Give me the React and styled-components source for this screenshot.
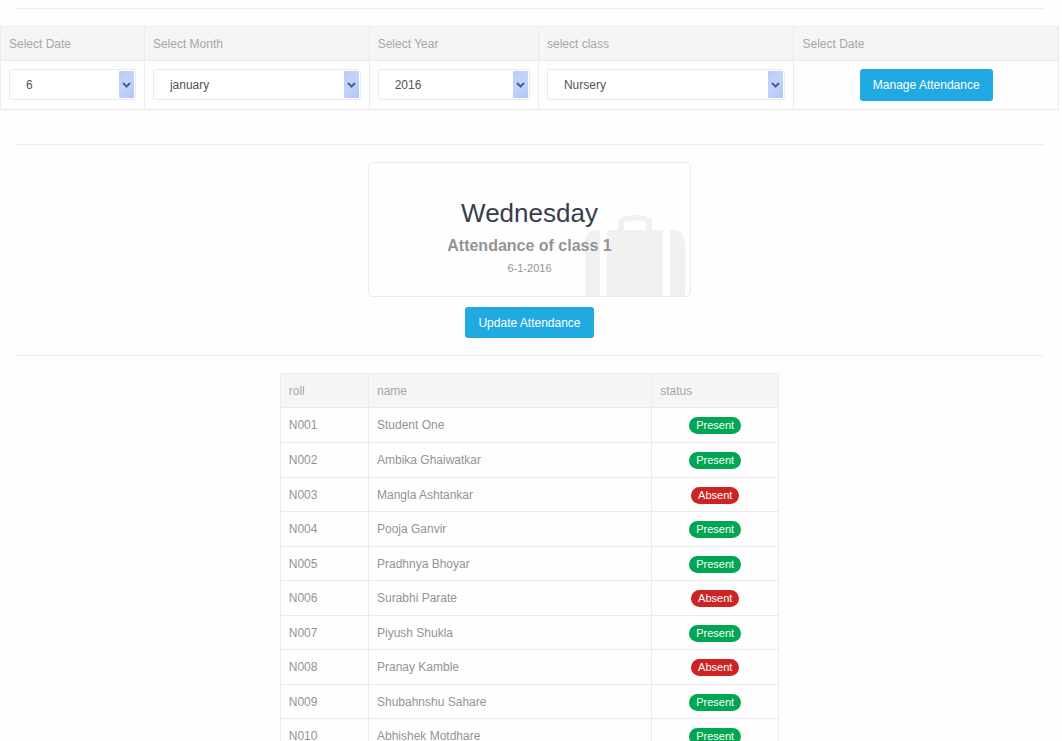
import React, { useState } from "react";
import styled, { createGlobalStyle } from "styled-components";

const GlobalStyle = createGlobalStyle`
  * { box-sizing: border-box; }
  body {
    margin: 0;
    background: #fefefe;
    color: #949494;
    font-family: "Liberation Sans", Arial, sans-serif;
    font-size: 12px;
    line-height: 18px;
  }
`;

const Page = styled.main`
  padding: 8px 3px 0 0;
`;

const Rule = styled.hr`
  margin: 0 15px;
  border: 0;
  border-top: 1px solid #eeeeee;
`;

const DataTable = styled.table`
  width: 100%;
  table-layout: fixed;
  border-collapse: collapse;
`;

const HeadCell = styled.th`
  height: 34px;
  padding: 0 8px;
  border: 1px solid #ebebeb;
  background: #f5f5f5;
  color: #a6a7aa;
  font-weight: 400;
  text-align: left;
`;

const Cell = styled.td`
  padding: 0 8px;
  border: 1px solid #ebebeb;
  text-align: ${(p) => (p.$center ? "center" : "left")};
`;

const FilterForm = styled.form`
  margin: 17px 0 34px;
`;

const FilterCell = styled(Cell)`
  height: 49px;
  padding: 8px;
  vertical-align: top;
`;

const SelectBox = styled.div`
  position: relative;
`;

const Select = styled.select`
  display: block;
  width: 100%;
  height: 31px;
  padding: 0 24px 0 16px;
  border: 1px solid #ebebeb;
  border-radius: 3px;
  background: #fff;
  color: #555;
  font: inherit;
  appearance: none;
`;

const Arrow = styled.span`
  position: absolute;
  top: 2px;
  right: 2px;
  bottom: 2px;
  width: 15px;
  display: flex;
  align-items: center;
  justify-content: center;
  border-radius: 1px;
  background: linear-gradient(135deg, #b9cbf6, #c4d3fc 50%, #aac8f8);
  pointer-events: none;
`;

const Button = styled.button`
  height: ${(p) => p.$height}px;
  padding: 0 13px;
  border: 0;
  border-radius: 3px;
  background: #21a9e1;
  color: #fff;
  font: inherit;
  cursor: pointer;
`;

const Summary = styled.section`
  display: flex;
  flex-direction: column;
  align-items: center;
  gap: 10px;
  padding: 17px 0;
`;

const CardColumn = styled.div`
  width: calc(100% / 3);
  padding: 0 15px;
`;

const Card = styled.div`
  position: relative;
  overflow: hidden;
  padding: 30px 20px 18px;
  border: 1px solid #ebebeb;
  border-radius: 5px;
  text-align: center;
`;

const Suitcase = styled.svg`
  position: absolute;
  right: 5px;
  bottom: 0;
  width: 100px;
  height: 81px;
  fill: #f1f1f1;
`;

const CardText = styled.div`
  position: relative;
`;

const Day = styled.h2`
  margin: 0;
  color: #373e4a;
  font-size: 26px;
  font-weight: 400;
  line-height: 40px;
`;

const ClassName = styled.h3`
  margin: 0;
  font-size: 16px;
  font-weight: 700;
  line-height: 26px;
`;

const DateLine = styled.p`
  margin: 0;
  font-size: 11px;
  line-height: 19px;
`;

const Roster = styled.section`
  width: 50%;
  margin: 17px auto 0;
  padding: 0 15px;
`;

const StudentRow = styled.tr`
  height: 35px;
  &:nth-child(2n + 3) { height: 34px; }
`;

const Badge = styled.span`
  display: inline-block;
  padding: 0 7px;
  border-radius: 9px;
  background: ${(p) => (p.$present ? "#00a651" : "#cc2424")};
  color: #fff;
  font-size: 11px;
  line-height: 17px;
  vertical-align: middle;
`;

const filters = [
  { id: "date", label: "Select Date", width: "13.6%", options: ["6", "7", "8"] },
  { id: "month", label: "Select Month", width: "21.25%", options: ["january", "february", "march"] },
  { id: "year", label: "Select Year", width: "16%", options: ["2016", "2015", "2014"] },
  { id: "class", label: "select class", width: "24.15%", options: ["Nursery", "One", "Two"] },
];

const students = [
  ["N001", "Student One", true],
  ["N002", "Ambika Ghaiwatkar", true],
  ["N003", "Mangla Ashtankar", false],
  ["N004", "Pooja Ganvir", true],
  ["N005", "Pradhnya Bhoyar", true],
  ["N006", "Surabhi Parate", false],
  ["N007", "Piyush Shukla", true],
  ["N008", "Pranay Kamble", false],
  ["N009", "Shubahnshu Sahare", true],
  ["N010", "Abhishek Motdhare", true],
];

function FilterSelect({ id, options }) {
  const [value, setValue] = useState(options[0]);
  return (
    <SelectBox>
      <Select id={id} value={value} onChange={(e) => setValue(e.target.value)}>
        {options.map((o) => (
          <option key={o}>{o}</option>
        ))}
      </Select>
      <Arrow aria-hidden="true">
        <svg width="9" height="6" viewBox="0 0 9 6">
          <path d="M1 1L4.500 4.500L8 1" fill="none" stroke="#4d6185" strokeWidth="2" />
        </svg>
      </Arrow>
    </SelectBox>
  );
}

export default function App() {
  return (
    <Page>
      <GlobalStyle />
      <Rule />
      <FilterForm onSubmit={(e) => e.preventDefault()}>
        <DataTable>
          <colgroup>
            {filters.map((f) => (
              <col key={f.id} width={f.width} />
            ))}
            <col />
          </colgroup>
          <thead>
            <tr>
              {filters.map((f) => (
                <HeadCell key={f.id}>
                  <label htmlFor={f.id}>{f.label}</label>
                </HeadCell>
              ))}
              <HeadCell>Select Date</HeadCell>
            </tr>
          </thead>
          <tbody>
            <tr>
              {filters.map((f) => (
                <FilterCell key={f.id}>
                  <FilterSelect id={f.id} options={f.options} />
                </FilterCell>
              ))}
              <FilterCell $center>
                <Button type="submit" $height={32}>Manage Attendance</Button>
              </FilterCell>
            </tr>
          </tbody>
        </DataTable>
      </FilterForm>
      <Rule />
      <Summary>
        <CardColumn>
          <Card>
            <Suitcase viewBox="0 0 100 81" aria-hidden="true">
              <path d="M15 15V81H0V28Q0 15 13 15ZM85 15V81H100V28Q100 15 87 15ZM22 15H33V4Q50 -4 67 4V15H78V81H22ZM39 15H61V7Q50 4 39 7Z" />
            </Suitcase>
            <CardText>
              <Day>Wednesday</Day>
              <ClassName>Attendance of class 1</ClassName>
              <DateLine>6-1-2016</DateLine>
            </CardText>
          </Card>
        </CardColumn>
        <Button type="button" $height={31}>Update Attendance</Button>
      </Summary>
      <Rule />
      <Roster>
        <DataTable>
          <colgroup>
            <col width="17.7%" />
            <col width="56.8%" />
            <col />
          </colgroup>
          <thead>
            <tr>
              <HeadCell>roll</HeadCell>
              <HeadCell>name</HeadCell>
              <HeadCell>status</HeadCell>
            </tr>
          </thead>
          <tbody>
            {students.map(([roll, name, present]) => (
              <StudentRow key={roll}>
                <Cell>{roll}</Cell>
                <Cell>{name}</Cell>
                <Cell $center>
                  <Badge $present={present}>{present ? "Present" : "Absent"}</Badge>
                </Cell>
              </StudentRow>
            ))}
          </tbody>
        </DataTable>
      </Roster>
    </Page>
  );
}
